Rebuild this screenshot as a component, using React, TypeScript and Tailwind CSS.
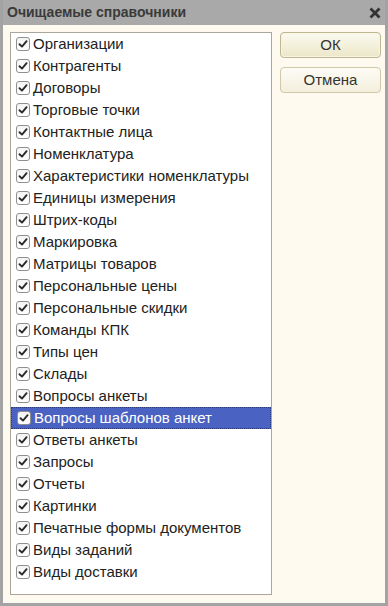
import React from "react";

const items = [
  "Организации",
  "Контрагенты",
  "Договоры",
  "Торговые точки",
  "Контактные лица",
  "Номенклатура",
  "Характеристики номенклатуры",
  "Единицы измерения",
  "Штрих-коды",
  "Маркировка",
  "Матрицы товаров",
  "Персональные цены",
  "Персональные скидки",
  "Команды КПК",
  "Типы цен",
  "Склады",
  "Вопросы анкеты",
  "Вопросы шаблонов анкет",
  "Ответы анкеты",
  "Запросы",
  "Отчеты",
  "Картинки",
  "Печатные формы документов",
  "Виды заданий",
  "Виды доставки",
];

function Check() {
  return (
    <span className="flex h-[14px] w-[14px] shrink-0 items-center justify-center rounded-[3px] border border-[#8f8f8f] bg-gradient-to-b from-[#f4f4f4] to-white">
      <svg width="10" height="10" viewBox="0 0 10 10">
        <path d="M1.5 5.2 L4 7.6 L8.6 2.2" fill="none" stroke="#2b2b2b" strokeWidth="1.9" strokeLinecap="round" strokeLinejoin="round" />
      </svg>
    </span>
  );
}

export default function App() {
  return (
    <div
      className="flex h-[606px] w-[388px] flex-col border-[3px] border-t-0 border-[#a3a3a3] bg-[#a9a9a9]"
      style={{ fontFamily: '"Liberation Sans", Arial, sans-serif' }}
    >
      <div className="flex h-[25px] shrink-0 items-center justify-between pl-[4px] pr-[4px]">
        <span className="text-[14px] font-bold text-[#3a3a3a]">Очищаемые справочники</span>
        <svg width="12" height="12" viewBox="0 0 12 12">
          <path d="M1.5 1.5 L10.5 10.5 M10.5 1.5 L1.5 10.5" stroke="#333" strokeWidth="2.8" />
        </svg>
      </div>
      <div className="flex flex-1 gap-[8px] bg-[#fefaf0] pl-[7px] pr-[4px] pt-[7px] pb-[6px]">
        <div className="flex h-[563px] w-[262px] flex-col border border-[#aaa79a] bg-white">
          {items.map((t) => {
            const sel = t === "Вопросы шаблонов анкет";
            return (
              <div
                key={t}
                className={
                  "flex h-[22px] items-center gap-[3px] pl-[5px] text-[15px] " +
                  (sel
                    ? "border border-dotted border-[#2a3a7a] bg-[#4a63c3] pl-[4px] text-white"
                    : "text-[#222]")
                }
              >
                <Check />
                <span className="whitespace-nowrap">{t}</span>
              </div>
            );
          })}
        </div>
        <div className="flex flex-1 flex-col gap-[9px]">
          <button className="h-[26px] w-full rounded-[4px] border border-[#bdb792] bg-gradient-to-b from-[#fbfaf0] to-[#ece7c9] text-[15px] text-[#333] shadow-[inset_0_0_0_1px_#f7f4e2]">
            ОК
          </button>
          <button className="h-[26px] w-full rounded-[4px] border border-[#cfc9a8] bg-gradient-to-b from-[#fdfcf5] to-[#f3efdd] text-[15px] text-[#333]">
            Отмена
          </button>
        </div>
      </div>
    </div>
  );
}
